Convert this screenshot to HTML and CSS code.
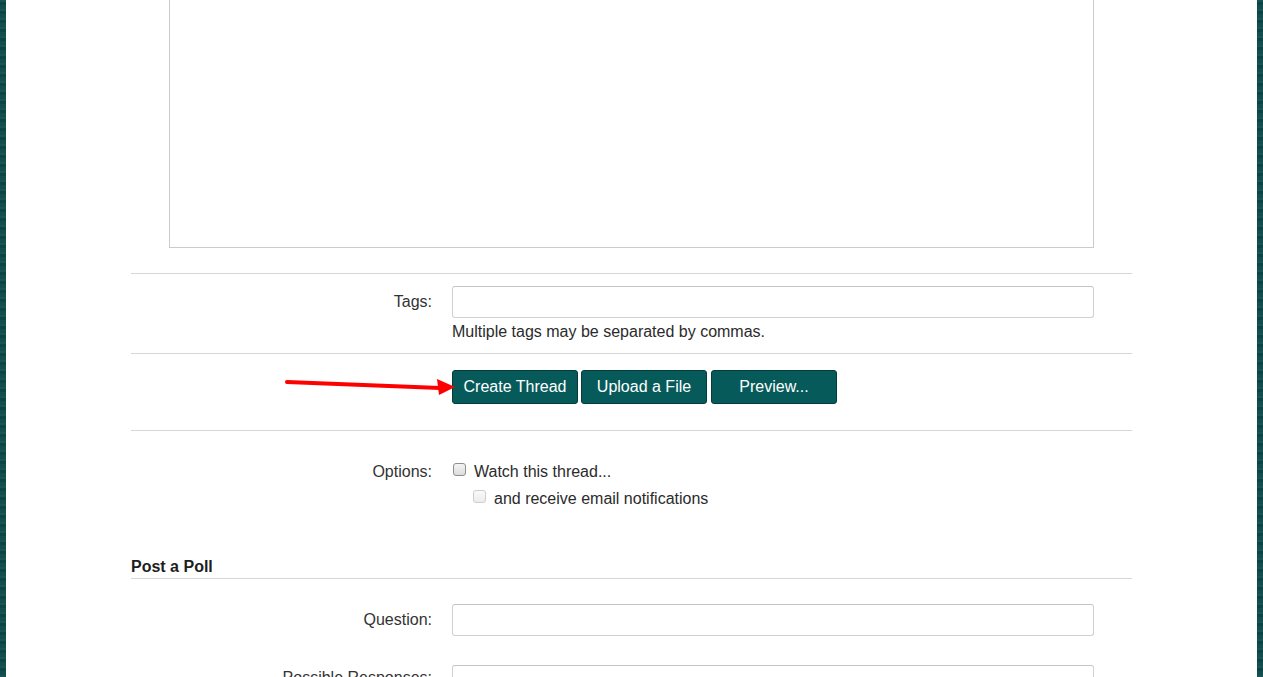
FILE: index.html
```html
<!DOCTYPE html>
<html lang="en">
<head>
<meta charset="utf-8">
<title>Post New Thread</title>
<link rel="stylesheet" href="styles.css">
</head>
<body>
<div class="page">
  <div class="content">
    <div class="editor"></div>

    <div class="form-row tags-row">
      <label class="label" for="tags">Tags:</label>
      <div class="field">
        <input id="tags" class="text-input" type="text">
        <p class="hint">Multiple tags may be separated by commas.</p>
      </div>
    </div>

    <div class="form-row buttons-row">
      <div class="label"></div>
      <div class="field buttons">
        <button class="btn btn-create">Create Thread</button>
        <button class="btn btn-upload">Upload a File</button>
        <button class="btn btn-preview">Preview...</button>
        <svg class="arrow" width="180" height="24" viewBox="0 0 180 24" aria-hidden="true">
          <line x1="7" y1="8" x2="160" y2="14" stroke="#f00" stroke-width="4" stroke-linecap="round"/>
          <polygon points="157,5 159,21 175,13" fill="#f00"/>
        </svg>
      </div>
    </div>

    <div class="form-row options-row">
      <div class="label">Options:</div>
      <div class="field">
        <label class="check"><span class="box"></span>Watch this thread...</label>
        <label class="check sub"><span class="box disabled"></span>and receive email notifications</label>
      </div>
    </div>

    <h3 class="section-title">Post a Poll</h3>

    <div class="form-row poll-row">
      <label class="label" for="q">Question:</label>
      <div class="field">
        <input id="q" class="text-input" type="text">
      </div>
    </div>

    <div class="form-row poll-row2">
      <label class="label" for="r">Possible Responses:</label>
      <div class="field">
        <input id="r" class="text-input" type="text" placeholder="Poll choice...">
      </div>
    </div>
  </div>
</div>
</body>
</html>
```

FILE: styles.css
```css
html, body {
  margin: 0;
  padding: 0;
}

body {
  font-family: "Liberation Sans", Arial, sans-serif;
  font-size: 16px;
  color: #2b2b2b;
  background-color: #0d4a4a;
  background-image:
    repeating-linear-gradient(180deg, rgba(255,255,255,0.05) 0px, rgba(255,255,255,0.05) 2px, rgba(0,0,0,0.08) 2px, rgba(0,0,0,0.08) 5px, rgba(255,255,255,0.02) 5px, rgba(255,255,255,0.02) 9px);
  overflow: hidden;
}

.page {
  margin: 0 6px;
  background: #fff;
  height: 760px;
  padding-left: 125px;
}

.content {
  width: 1001px;
}

.editor {
  margin-left: 38px;
  width: 925px;
  height: 248px;
  box-sizing: border-box;
  border: 1px solid #cbcbcb;
  border-top: none;
}

.form-row {
  display: grid;
  grid-template-columns: 301px 642px;
  column-gap: 20px;
  border-top: 1px solid #d6d6d6;
}

.label {
  text-align: right;
  line-height: 20px;
  padding-top: 6px;
  color: #333;
}

.field {
  position: relative;
}

.text-input {
  display: block;
  width: 642px;
  height: 32px;
  box-sizing: border-box;
  margin: 0;
  border: 1px solid #d0d0d0;
  border-top-color: #c4c4c4;
  border-radius: 3px;
  background: #fff;
  font: 16px "Liberation Sans", Arial, sans-serif;
  padding: 0 6px;
}

.text-input::placeholder {
  color: #b8b8b8;
  font-style: italic;
  font-size: 13px;
}

.hint {
  margin: 4px 0 0;
  line-height: 20px;
  color: #2b2b2b;
}

.tags-row {
  margin-top: 25px;
  padding: 12px 0 11px;
}

.buttons-row {
  padding: 16px 0 26px;
}

.buttons {
  display: flex;
  height: 34px;
}

.btn {
  width: 126px;
  height: 34px;
  box-sizing: border-box;
  margin: 0 3px 0 0;
  padding: 0;
  border: 1px solid #043c3c;
  border-radius: 3px;
  background: #075a5a;
  color: #fff;
  font: 16px "Liberation Sans", Arial, sans-serif;
  text-align: center;
}

.btn-upload {
  margin-right: 4px;
}

.arrow {
  position: absolute;
  left: -172px;
  top: 4px;
}

.options-row {
  border-top: 1px solid #d6d6d6;
  padding-top: 31px;
}

.options-row .label {
  padding-top: 0;
}

.check {
  display: flex;
  align-items: center;
  line-height: 20px;
  color: #2b2b2b;
}

.check.sub {
  margin-top: 7px;
  margin-left: 20px;
}

.box {
  display: inline-block;
  width: 13px;
  height: 13px;
  box-sizing: border-box;
  margin: -5px 8px 0 1px;
  border: 1px solid #8e8e8e;
  border-radius: 3px;
  background: linear-gradient(#f4f4f4, #dcdcdc);
}

.box.disabled {
  border-color: #cdcdcd;
  background: linear-gradient(#fafafa, #ececec);
}

.section-title {
  margin: 48px 0 0;
  font-size: 16px;
  line-height: 20px;
  font-weight: bold;
  color: #1e1e1e;
  padding-bottom: 1px;
  border-bottom: 1px solid #d6d6d6;
}

.poll-row {
  border-top: none;
  padding-top: 25px;
}

.poll-row2 {
  border-top: none;
  padding-top: 29px;
}

.poll-row2 .label {
  padding-top: 3px;
}
```
